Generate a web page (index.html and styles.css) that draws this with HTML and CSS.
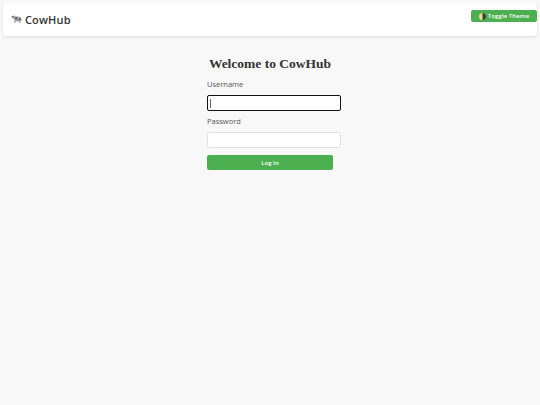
FILE: index.html
```html
<!DOCTYPE html>
<html lang="en">
<head>
<meta charset="utf-8">
<title>CowHub</title>
<link rel="stylesheet" href="styles.css">
</head>
<body>
<header class="topbar">
  <div class="brand">
    <svg class="cow" viewBox="0 0 24 20" width="11" height="9" aria-hidden="true">
      <path d="M1 2 L6 1 L9 3 L20 4 Q23 5 23 9 L23 13 L21 13 L21 18 L18 18 L18 14 L10 14 L10 18 L7 18 L7 12 L5 8 L2 6 Z" fill="#a8a8a8"/>
      <path d="M9 5 L14 5 L13 10 L9 9 Z M17 8 L21 7 L21 12 L17 12 Z" fill="#555"/>
      <path d="M1 2 L5 2 L5 6 L2 6 Z" fill="#777"/>
      <path d="M10 14 L16 14 L15 16 L11 16 Z" fill="#d9c4c4"/>
    </svg>
    <span class="brand-name">CowHub</span>
  </div>
  <button class="theme-btn" type="button">
    <svg class="moon" viewBox="0 0 10 10" width="7" height="7" aria-hidden="true">
      <circle cx="5" cy="5" r="5" fill="#e8dc8c"/>
      <path d="M5 0 A5 5 0 0 1 5 10 Z" fill="#3c3c3c"/>
    </svg>
    <span>Toggle Theme</span>
  </button>
</header>
<main class="login">
  <h1 class="title">Welcome to CowHub</h1>
  <form class="form">
    <label class="label" for="username">Username</label>
    <input class="field" id="username" type="text">
    <label class="label" for="password">Password</label>
    <input class="field field-plain" id="password" type="password">
    <button class="submit" type="button">Log In</button>
  </form>
</main>
</body>
</html>
```
FILE: styles.css
```css
html, body {
  margin: 0;
  height: 100%;
}
body {
  background: #f8f8f8;
  padding: 3px 3px 0;
  box-sizing: border-box;
  font-family: "Open Sans", sans-serif;
  color: #444;
}
.topbar {
  height: 33px;
  background: #fff;
  border-radius: 2px;
  box-shadow: 0 1px 3px rgba(0, 0, 0, 0.12);
  display: flex;
  align-items: flex-start;
  justify-content: space-between;
  padding: 7px 0 0 8px;
  box-sizing: border-box;
}
.brand {
  display: flex;
  align-items: center;
  gap: 3px;
  height: 19px;
}
.brand-name {
  font-size: 11px;
  font-weight: 600;
  color: #333;
  letter-spacing: 0.15px;
}
.theme-btn {
  width: 66px;
  height: 12px;
  border: 0;
  border-radius: 2px;
  background: #4caf50;
  color: #fff;
  font: 600 6px "Open Sans", sans-serif;
  letter-spacing: 0.1px;
  padding: 0;
  display: flex;
  align-items: center;
  justify-content: center;
  gap: 2px;
}
.login {
  width: 126px;
  margin: 0 auto;
  padding-top: 19px;
}
.title {
  margin: 0 0 7px;
  text-align: center;
  font: bold 13.5px "Liberation Serif", serif;
  color: #333;
  line-height: 17px;
  white-space: nowrap;
}
.form {
  display: flex;
  flex-direction: column;
  align-items: flex-start;
}
.label {
  font-size: 7.5px;
  line-height: 10px;
  color: #555;
  margin-bottom: 6px;
}
.field {
  width: 134px;
  height: 16px;
  box-sizing: border-box;
  border: 1.5px solid #111;
  border-radius: 2px;
  background: #fff linear-gradient(#333, #333) 2px 50% / 0.75px 9px no-repeat;
  margin: 0 0 5px;
  padding: 0 2px;
  font-size: 7.5px;
  outline: none;
}
.field-plain {
  border: 1px solid #e2e2e2;
  background: #fff;
}
.submit {
  width: 126px;
  height: 15px;
  margin-top: 2px;
  border: 0;
  border-radius: 2px;
  background: #4caf50;
  color: #fff;
  font: 600 6px "Open Sans", sans-serif;
  padding: 0;
}
```
